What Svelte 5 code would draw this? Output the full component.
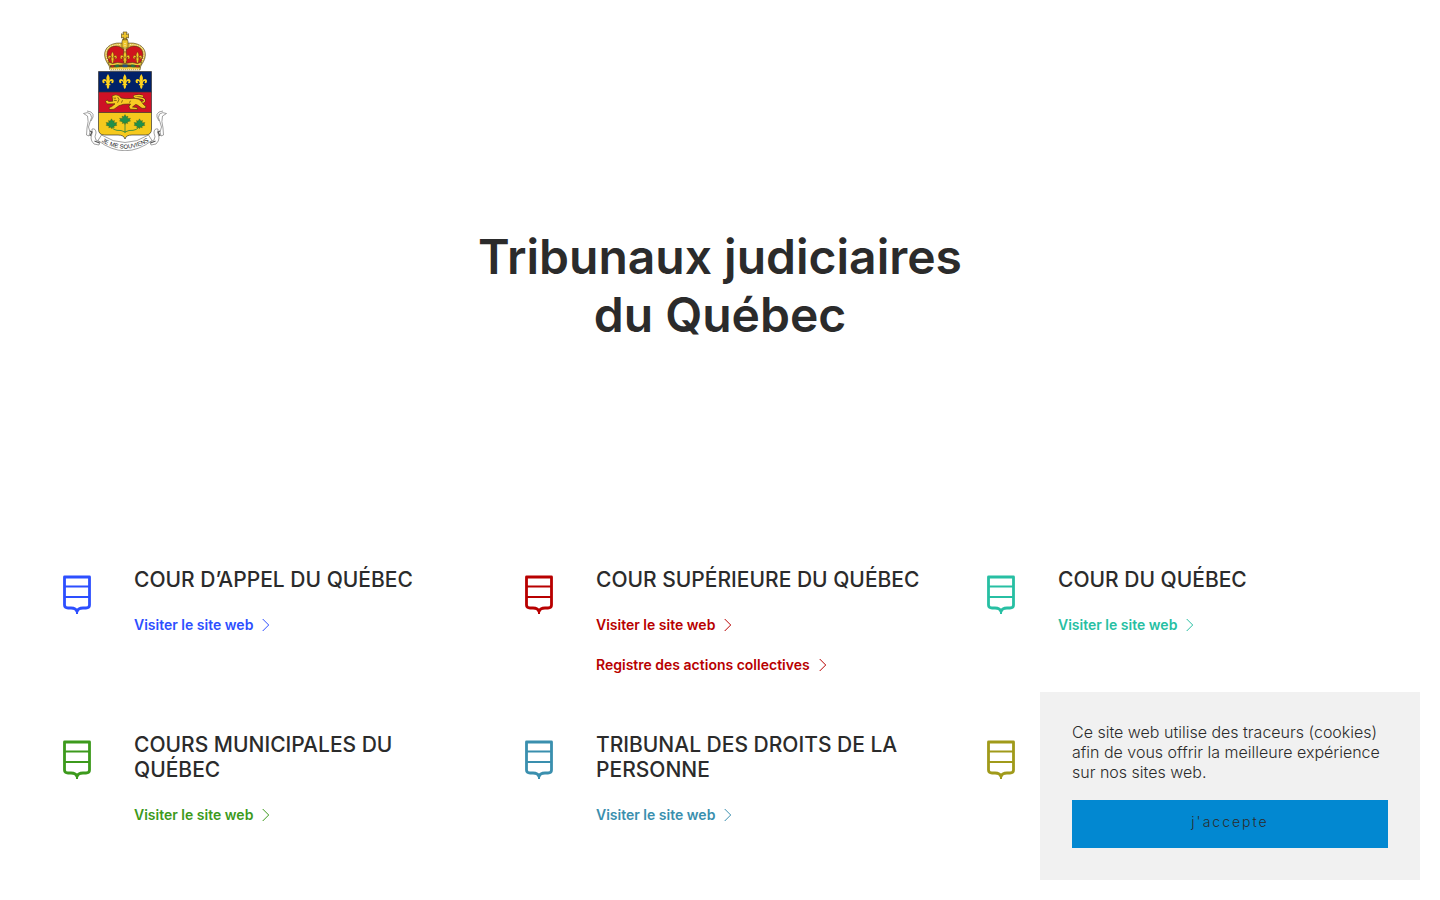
<script>
  const visit = 'Visiter le site web';
  const courts = [
    { name: 'Cour d’appel du Québec', color: '#2d4fff', links: [visit] },
    { name: 'Cour supérieure du Québec', color: '#b80000', links: [visit, 'Registre des actions collectives'] },
    { name: 'Cour du Québec', color: '#27bfa3', links: [visit] },
    { name: 'Cours municipales du Québec', color: '#3c9a1c', links: [visit] },
    { name: 'Tribunal des droits de la personne', color: '#3a8fae', links: [visit] },
    { name: '', color: '#a09a1a', links: [] }
  ];
  let showCookies = $state(true);
</script>

<header>
  <a class="logo" href="#top">
    <svg width="84" height="120" viewBox="0 0 84 120" role="img">
      <defs>
        <path id="fleur" d="M0-7.500C-1.200-5.500-1.900-4-1.600-2.200L-.8.8C-1.300-3.200-5.600-3.800-5.700-.2c0 1.900 1.800 2.500 2.600 1.200-.6-.2-.9-1-.3-1.400.9-.5 1.700.8 2 2.900H-2.400V3.800H-1C-1.600 5.300-1 6.500 0 7.500 1 6.500 1.600 5.300 1 3.800H2.400V2.500H1.400c.3-2.100 1.100-3.400 2-2.900.6.4.3 1.200-.3 1.400.8 1.300 2.600.7 2.600-1.200C5.600-3.800 1.300-3.200.8.8L1.600-2.200C1.900-4 1.200-5.500 0-7.500Z" />
        <path id="maple" d="M0-5 1.400-2.700 3-3.400 2.500-1 5.500-1.200 4.500.4 5.600 1.400 2.300 2.400 2.800 4 .6 3.400 0 5-.6 3.400-2.800 4-2.300 2.400-5.600 1.400-4.500.4-5.500-1.200-2.500-1-3-3.400-1.400-2.700Z" />
        <path id="motto" d="M16 109Q42 126.500 68.500 108.500" />
      </defs>
      <g stroke="#4b3a12" stroke-width=".6">
        <path fill="#d0151e" d="M26.500 33C20 26 21.500 16 31 14.500q6-1.500 11-1 5-.5 11 1c10 1.500 11 11.500 4.500 18.500Z" />
        <path fill="#e5c44d" d="M26 34.500C18 24 22 15.500 30 13 35.500 11 38 13 42 11.500 46 13 48.500 11 54 13c8 2.500 12 11 4 21.500l-1.500-1.500C62.500 25 60 17 54 15.500c-4-1.200-7.500.2-9.800 2.500H43.200v14h-2.400V18h-1C37.500 15.700 34 14.300 30 15.500 24 17 21.500 25 27.500 33Z" />
        <path fill="#efc62f" d="M40 1h4l-.7 2.500 2.200-.8v4.300l-2.200-.8.7 2.600h-4l.7-2.600-2.200.8V2.700l2.200.8ZM39 10.500a3 3 0 0 1 6 0V17h-6Z" />
        <path fill="#f4cf3b" d="m25.500 31 4 1.500 5-1 7.500 1 7.500-1 5 1 4-1.500-1.500 8H27Z" />
      </g>
      <g fill="none" stroke="#fff6cf" stroke-width="1" stroke-dasharray="1 1.200">
        <path d="M24.500 29C21 21 24 15.500 30 14.300l8-1M59.500 29c3.500-8 .5-13.500-5.500-14.700l-8-1M42 12v9" />
      </g>
      <g fill="#f7cc29" stroke="#5b3a10" stroke-width=".5">
        <use href="#fleur" transform="translate(29.500 26.500) scale(.78)" />
        <use href="#fleur" transform="translate(42 26.500) scale(.84)" />
        <use href="#fleur" transform="translate(54.500 26.500) scale(.78)" />
      </g>
      <path d="M27 34.200q15-1.500 30 0v2.400q-15-1-30 0Z" fill="#5c4a17" />
      <path fill="#24507d" d="M39.500 33.500h5v2.800h-5z" />
      <path fill="#21724a" d="m32.500 33.700 3.200-.2v2.600l-3.200.2ZM48.300 33.500l3.200.2v2.600l-3.200-.2Z" />
      <path fill="#b9232a" d="M28.500 34h2v2.200h-2zM53.500 34h2v2.200h-2z" />
      <path d="M27 38.500h30" stroke="#eee6c1" stroke-width="1.400" stroke-dasharray="1.200 .8" />
      <path fill="#f6c91d" d="M15.500 81h53v17q0 6-6 6H49q-6 0-7 4-1-4-7-4H21.500q-6 0-6-6Z" />
      <path fill="#012169" d="M15.500 40.500h53V61h-53z" />
      <path fill="#ce1126" d="M15.500 61h53v20.500h-53z" />
      <path fill="none" stroke="#343434" stroke-width=".7" d="M15.500 40.500h53V98q0 6-6 6H49q-6 0-7 4-1-4-7-4H21.500q-6 0-6-6ZM15.500 61h53M15.500 81.500h53" />
      <g fill="#ffd31c">
        <use href="#fleur" x="25" y="50.500" /><use href="#fleur" x="41.800" y="50.500" /><use href="#fleur" x="58.300" y="50.500" />
      </g>
      <g fill="#f8ca23" stroke="#4b3208" stroke-width=".65" stroke-linejoin="round">
        <path fill="none" stroke="#4b3208" stroke-width="2.400" d="M57 72c7-1 5-4.500 0-5-7-.5-8-2.500-1-2.500l4 .7" />
        <path fill="none" stroke="#f8ca23" stroke-width="1.400" d="M57 72c7-1 5-4.500 0-5-7-.5-8-2.500-1-2.500l4 .7" />
        <path d="M29 65q4-2.500 7.500 0l1.500 2q5 1.200 11 .4 7.500-.4 9.500 3.400 1.500 2.300 3 3.700l1.300.2-.2 2.600h-3.600L54 73.800l-1.500-.3-3 2.500 4.500.5.600 2.100-7.600-.4-1-2.700 1.500-2.500-7 .3-4.500 1.400-5 3.500-4.500.4-.5-2 2.500-.9 3.500-2.900-8 .1-1.500-2.300 1.500-1.700 1.800 1.500 4-.2Z" />
        <path fill="none" d="m30.500 67 1.500.3 1-.3m-2 2.300 2.700.2m1-3.300 1.300 2.500-1.500 3m5-2.500-1 2.500m9-2-1 2" />
      </g>
      <g fill="none" stroke="#29833d" stroke-width=".8"><path d="M42 90v12M28 94q1 6 10 5.500l4 1.500 4-1.500q9 .5 11-5.500" /></g>
      <g fill="#21904a" stroke="#4b5714" stroke-width=".35">
        <use href="#maple" x="28.500" y="92.800" /><use href="#maple" x="42" y="88.500" /><use href="#maple" x="56.500" y="92.800" />
      </g>
      <g fill="#fff" stroke="#707070" stroke-width=".65" stroke-linejoin="round">
        <path d="M.5 82.500q4-2 7 .5Q10 86 7 91q-3 5 0 10l-1 4-2.500-1 .5-7Q6 90 4.500 85ZM4 80l4 1q3 2 2 5l-2 4" />
        <path d="M83.500 82.500q-4-2-7 .5-2.500 3 .5 8 3 5 0 10l1 4 2.500-1-.5-7q-2-7-.5-12ZM80 80l-4 1q-3 2-2 5l2 4" />
        <path d="M9 98q4-1 4 4-2 4 0 7l4 2-1 3-5-1q-3-3-3-6l1-5Z" />
        <path d="M75 98q-4-1-4 4 2 4 0 7l-4 2 1 3 5-1q3-3 3-6l-1-5Z" />
        <path d="M18.500 104Q42 119 65.500 104l3.500 5.500Q42 130 15 109.500Z" />
      </g>
      <path d="m7 100 2 1-2 4m4.500 5 5 2m60.500-12-2 1 2 4m-4.500 5-5 2" fill="none" stroke="#555" stroke-width="1.200" />
      <text class="motto"><textPath href="#motto" startOffset="50%" text-anchor="middle">JE ME SOUVIENS</textPath></text>
    </svg>
  </a>
</header>

<main id="top">
  <h1>Tribunaux judiciaires<br />du Québec</h1>
  <section class="courts">
    {#each courts as court}
      <article style:color={court.color}>
        <svg class="shield" width="30" height="40" viewBox="0 0 30 40" aria-hidden="true">
          <path d="M2.500 2h25v28q0 3-3.500 3h-3q-5 0-6 3.500-1-3.500-6-3.500H6q-3.500 0-3.500-3Z" fill="none" stroke="currentColor" stroke-width="2.800" stroke-linejoin="round" />
          <path d="M2.500 11.500h25M2.500 22h25M15 34v5" stroke="currentColor" stroke-width="2" />
        </svg>
        {#if court.name}
          <div class="details">
            <h2>{court.name}</h2>
            <ul>
              {#each court.links as link}
                <li>
                  <a href="#top">{link}<svg width="8" height="14" viewBox="0 0 8 14" aria-hidden="true"><path d="m.7 1 6 6-6 6" fill="none" stroke="currentColor" /></svg></a>
                </li>
              {/each}
            </ul>
          </div>
        {/if}
      </article>
    {/each}
  </section>
</main>

{#if showCookies}
  <aside>
    <p>Ce site web utilise des traceurs (cookies) afin de vous offrir la meilleure expérience sur nos sites web.</p>
    <button type="button" onclick={() => (showCookies = false)}>j'accepte</button>
  </aside>
{/if}

<style>
  :global(body) {
    margin: 0;
    background: #fff;
    color: #2b2b2b;
    font-family: Inter, "Liberation Sans", sans-serif;
  }
  header { padding: 31px 83px 0; }
  .logo { display: block; width: fit-content; }
  .logo svg { display: block; }
  .motto { font: 400 6px "Liberation Sans", sans-serif; fill: #222; }
  h1 {
    margin: 0;
    padding: 77px 24px 225px;
    text-align: center;
    font-size: 48px;
    line-height: 58px;
    font-weight: 600;
  }
  .courts {
    display: grid;
    grid-template-columns: repeat(3, minmax(0, 1fr));
    padding: 0 27px;
  }
  article {
    display: flex;
    align-items: flex-start;
    gap: 42px;
    padding: 0 28px 59px 35px;
  }
  .shield { flex: none; margin-top: 6px; }
  h2 {
    margin: -2px 0 0;
    color: #2b2b2b;
    font-size: 21px;
    line-height: 25px;
    font-weight: 500;
    text-transform: uppercase;
  }
  ul {
    display: grid;
    gap: 20px;
    margin: 23px 0 0;
    padding: 0;
    list-style: none;
  }
  li { line-height: 20px; }
  li a {
    display: flex;
    width: fit-content;
    align-items: center;
    gap: 9px;
    color: inherit;
    font-size: 14px;
    font-weight: 600;
    text-decoration: none;
  }
  aside {
    position: fixed;
    right: 20px;
    bottom: 20px;
    box-sizing: border-box;
    width: 380px;
    max-width: calc(100% - 40px);
    padding: 30px 32px 32px;
    background: #f1f1f1;
  }
  aside p {
    margin: 0 0 18px;
    font-size: 16px;
    line-height: 20px;
    font-weight: 300;
  }
  button {
    display: block;
    width: 100%;
    padding: 12px 8px 16px;
    border: 0;
    background: #0288d1;
    color: #2b2b2b;
    font-family: inherit;
    font-size: 14px;
    line-height: 20px;
    font-weight: 300;
    letter-spacing: 2px;
    cursor: pointer;
  }
</style>
